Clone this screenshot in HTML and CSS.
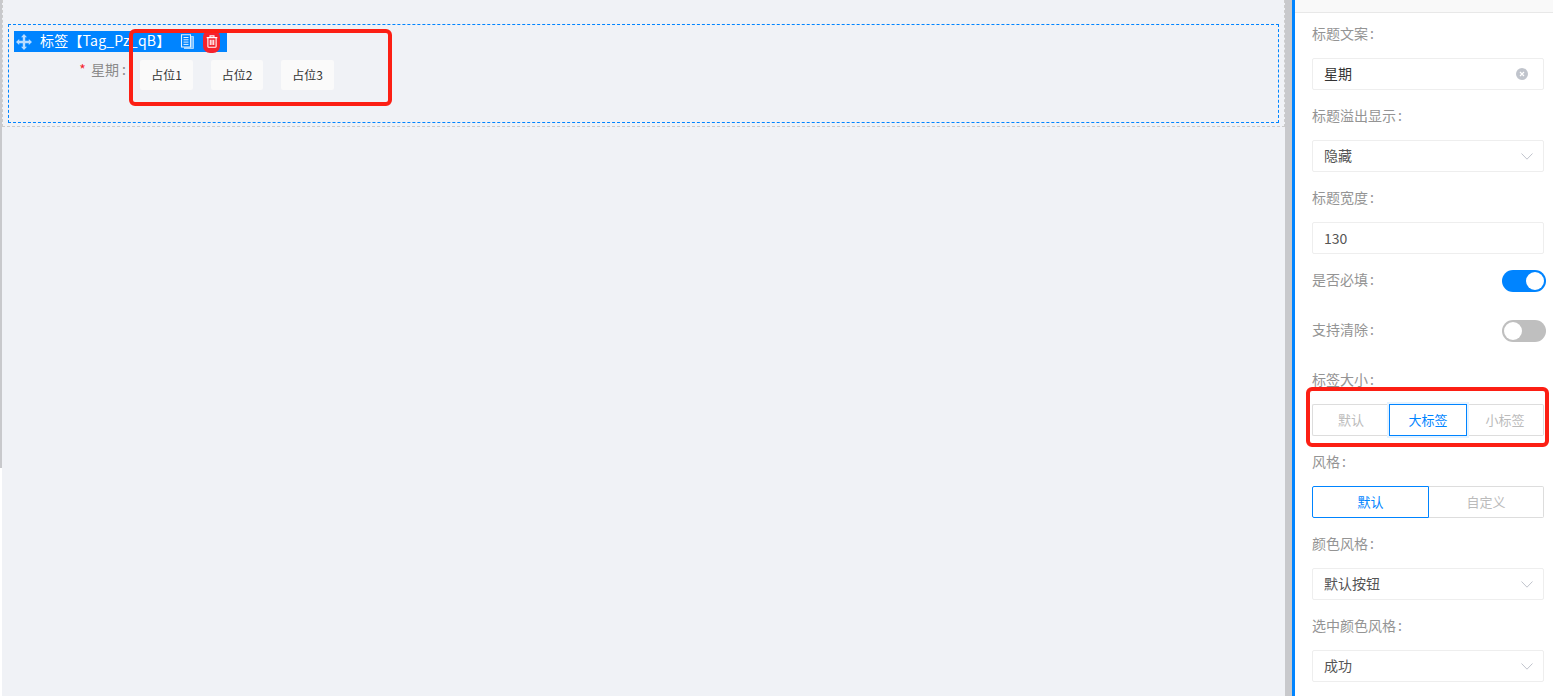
FILE: index.html
```html
<!DOCTYPE html>
<html>
<head>
    <meta charset="utf-8">
    <title>标签</title>
    <link rel="stylesheet" href="styles.css">
</head>
<body>
<div class="page">
    <div class="strip"><div class="strip-fill"></div></div>
    <div class="canvas">
        <div class="drop-zone">
            <div class="widget">
                <div class="widget-bar">
                    <svg class="icon-move" viewBox="0 0 16 16" width="16" height="16"><path d="M8 0 11 3.200H9.200v3.600h3.600V5L16 8l-3.200 3V9.200H9.200v3.600H11L8 16l-3-3.200h1.800V9.200H3.200V11L0 8l3.200-3v1.800h3.600V3.200H5z" fill="#b9dcff"/></svg>
                    <span class="widget-title">标签【Tag_Pz_qB】</span>
                    <svg class="icon-copy" viewBox="0 0 15 15" width="15" height="15"><path d="M4 2.500h9.500v12H4" fill="#7fc0ff" stroke="#a8d6ff"/><path d="M1.500.7h9v12.300h-9z" fill="#0084ff" stroke="#e4f2ff" stroke-width="1.100"/><path d="M3.500 3.500h5M3.500 5.800h5M3.500 8.100h5M3.500 10.400h5" stroke="#e4f2ff"/></svg>
                    <span class="trash-wrap">
                        <svg viewBox="0 0 14 15" width="12" height="13"><path d="M.8 3h12.400M4.700 3V1h4.600v2M2.200 3v10.200q0 1 1 1h7.600q1 0 1-1V3M5 5.600v6M7 5.600v6M9 5.600v6" fill="none" stroke="#fff" stroke-width="1.300"/></svg>
                    </span>
                </div>
                <div class="widget-row">
                    <div class="row-label"><span class="star">*</span> 星期 :</div>
                    <div class="tags">
                        <span class="tag tag-a">占位1</span>
                        <span class="tag tag-b">占位2</span>
                        <span class="tag tag-c">占位3</span>
                    </div>
                </div>
            </div>
        </div>
    </div>
    <div class="gutter"></div>
    <div class="panel">
        <div class="panel-head"></div>
        <div class="panel-body">
            <div class="field">
                <div class="label">标题文案<span class="colon">:</span></div>
                <div class="input"><span class="value">星期</span>
                    <svg class="clear" viewBox="0 0 12 12" width="12" height="12"><circle cx="6" cy="6" r="6" fill="#c0c4cc"/><path d="M4 4l4 4M8 4l-4 4" stroke="#fff" stroke-width="1.200"/></svg>
                </div>
            </div>
            <div class="field">
                <div class="label">标题溢出显示<span class="colon">:</span></div>
                <div class="input"><span class="value soft">隐藏</span>
                    <svg class="arrow" viewBox="0 0 12 7" width="12" height="7"><path d="M.5.5 6 6.200 11.500.5" fill="none" stroke="#c0c4cc"/></svg>
                </div>
            </div>
            <div class="field">
                <div class="label">标题宽度<span class="colon">:</span></div>
                <div class="input"><span class="num">130</span></div>
            </div>
            <div class="switch-row">
                <div class="label">是否必填<span class="colon">:</span></div>
                <div class="switch on"><i></i></div>
            </div>
            <div class="switch-row">
                <div class="label">支持清除<span class="colon">:</span></div>
                <div class="switch"><i></i></div>
            </div>
            <div class="field">
                <div class="label">标签大小<span class="colon">:</span></div>
                <div class="segments">
                    <div class="seg seg-size1">默认</div>
                    <div class="seg seg-size2 active halo">大标签</div>
                    <div class="seg seg-size3">小标签</div>
                </div>
            </div>
            <div class="field">
                <div class="label">风格<span class="colon">:</span></div>
                <div class="segments">
                    <div class="seg seg-half active">默认</div>
                    <div class="seg seg-half">自定义</div>
                </div>
            </div>
            <div class="field">
                <div class="label">颜色风格<span class="colon">:</span></div>
                <div class="input"><span class="value soft">默认按钮</span>
                    <svg class="arrow" viewBox="0 0 12 7" width="12" height="7"><path d="M.5.5 6 6.200 11.500.5" fill="none" stroke="#c0c4cc"/></svg>
                </div>
            </div>
            <div class="field">
                <div class="label">选中颜色风格<span class="colon">:</span></div>
                <div class="input"><span class="value soft">成功</span>
                    <svg class="arrow" viewBox="0 0 12 7" width="12" height="7"><path d="M.5.5 6 6.200 11.500.5" fill="none" stroke="#c0c4cc"/></svg>
                </div>
            </div>
        </div>
    </div>
    <!-- annotation boxes drawn over the screenshot -->
    <div class="mark mark-tags"></div>
    <div class="mark mark-size"></div>
</div>
</body>
</html>
```

FILE: styles.css
```css
html, body {
    margin: 0;
    height: 100%;
    overflow: hidden;
}
body {
    font-family: "Noto Sans CJK SC", "Noto Sans", sans-serif;
    font-size: 14px;
    color: #333;
    background: #fff;
}
.page {
    display: flex;
    height: 696px;
    position: relative;
}
.strip {
    width: 2px;
    flex: none;
    background: #fff;
}
.strip-fill {
    height: 468px;
    background: #c8c9cc;
}
.canvas {
    flex: 1;
    background: #f0f2f6;
}
.drop-zone {
    height: 127px;
    box-sizing: border-box;
    border-bottom: 1px dashed #ccc;
    border-left: 1px dashed #ccc;
    border-right: 1px dashed #ccc;
    padding: 24px 5px 0 5px;
}
.widget {
    height: 99px;
    box-sizing: border-box;
    border: 1px dashed #0084ff;
    padding-top: 6px;
    padding-left: 5px;
}
.widget-bar {
    width: 213px;
    height: 21px;
    background: #0084ff;
    color: #fff;
    display: flex;
    align-items: center;
    padding-left: 2px;
    box-sizing: border-box;
}
.icon-move {
    flex: none;
}
.widget-title {
    margin-left: 8px;
    line-height: 19px;
    height: 21px;
    letter-spacing: .2px;
    white-space: nowrap;
    width: 139px;
}
.icon-copy {
    margin-left: 1px;
    flex: none;
}
.trash-wrap {
    display: flex;
    align-items: center;
    justify-content: center;
    width: 17px;
    height: 23px;
    margin-left: 8px;
    margin-top: -1px;
    background: #f5222d;
    border-radius: 7px;
}
.widget-row {
    display: flex;
    margin-top: 8px;
}
.row-label {
    width: 112px;
    box-sizing: border-box;
    text-align: right;
    line-height: 18px;
    color: #8a8a8a;
    white-space: nowrap;
}
.star {
    color: #f5222d;
    margin-right: 2px;
}
.tags {
    display: flex;
    margin-left: 14px;
}
.tag {
    height: 30px;
    line-height: 30px;
    text-align: center;
    font-size: 12px;
    color: #333;
    background: #fafafa;
    border-radius: 2px;
}
.tag-a {
    width: 53px;
    margin-right: 18px;
}
.tag-b {
    width: 52px;
    margin-right: 18px;
}
.tag-c {
    width: 53px;
}
.gutter {
    width: 7px;
    flex: none;
    background: #c8c9cc;
}
.panel {
    width: 261px;
    flex: none;
    box-sizing: border-box;
    border-left: 3px solid #0084ff;
    background: #fff;
}
.panel-head {
    height: 12px;
    background: #f9f9f9;
    border-bottom: 1px solid #e8e8e8;
}
.panel-body {
    padding: 11px 7px 0 17px;
}
.label {
    height: 20px;
    line-height: 18px;
    color: #949494;
    white-space: nowrap;
}
.colon {
    margin-left: 2px;
}
.field {
    margin-bottom: 16px;
}
.field .label {
    margin-bottom: 14px;
}
.input {
    height: 32px;
    width: 232px;
    box-sizing: border-box;
    border: 1px solid #eee;
    border-radius: 2px;
    display: flex;
    align-items: center;
    justify-content: space-between;
    padding: 0 15px 0 11px;
    color: #333;
}
.value {
    margin-top: -2px;
}
.value.soft, .num {
    color: #555;
}
.arrow {
    margin-right: -5px;
}
.switch-row {
    display: flex;
    justify-content: space-between;
    align-items: center;
    height: 22px;
    margin-bottom: 28px;
}
.switch-row .label {
    margin-top: -2px;
}
.switch {
    width: 44px;
    height: 22px;
    border-radius: 11px;
    background: #bfbfbf;
    display: flex;
    align-items: center;
    padding: 0 2px;
    box-sizing: border-box;
}
.switch.on {
    background: #0084ff;
    justify-content: flex-end;
}
.switch i {
    width: 18px;
    height: 18px;
    border-radius: 50%;
    background: #fff;
}
.segments {
    display: flex;
    width: 232px;
    height: 32px;
    box-sizing: border-box;
    border-radius: 2px;
}
.seg {
    box-sizing: border-box;
    height: 32px;
    line-height: 30px;
    text-align: center;
    font-size: 13px;
    color: #bbb;
    border: 1px solid #ddd;
}
.seg:first-child {
    border-radius: 2px 0 0 2px;
}
.seg:last-child {
    border-radius: 0 2px 2px 0;
}
.seg.active {
    color: #0084ff;
    border-color: #0084ff;
}
.seg-size1 {
    width: 77px;
    border-right: 0;
}
.seg-size2 {
    width: 78px;
}
.seg-size3 {
    width: 77px;
    border-left: 0;
}
.seg-half:first-child {
    width: 117px;
}
.seg-half:last-child {
    border-left: 0;
    width: 115px;
}
.halo {
    box-shadow: 0 0 0 2px #e6f3ff;
    position: relative;
}
.mark {
    position: absolute;
    box-sizing: border-box;
    border: 4px solid #fc1f14;
    border-radius: 6px;
}
.mark-tags {
    left: 129px;
    top: 29px;
    width: 263px;
    height: 77px;
}
.mark-size {
    left: 1306px;
    top: 387px;
    width: 243px;
    height: 60px;
}
```
